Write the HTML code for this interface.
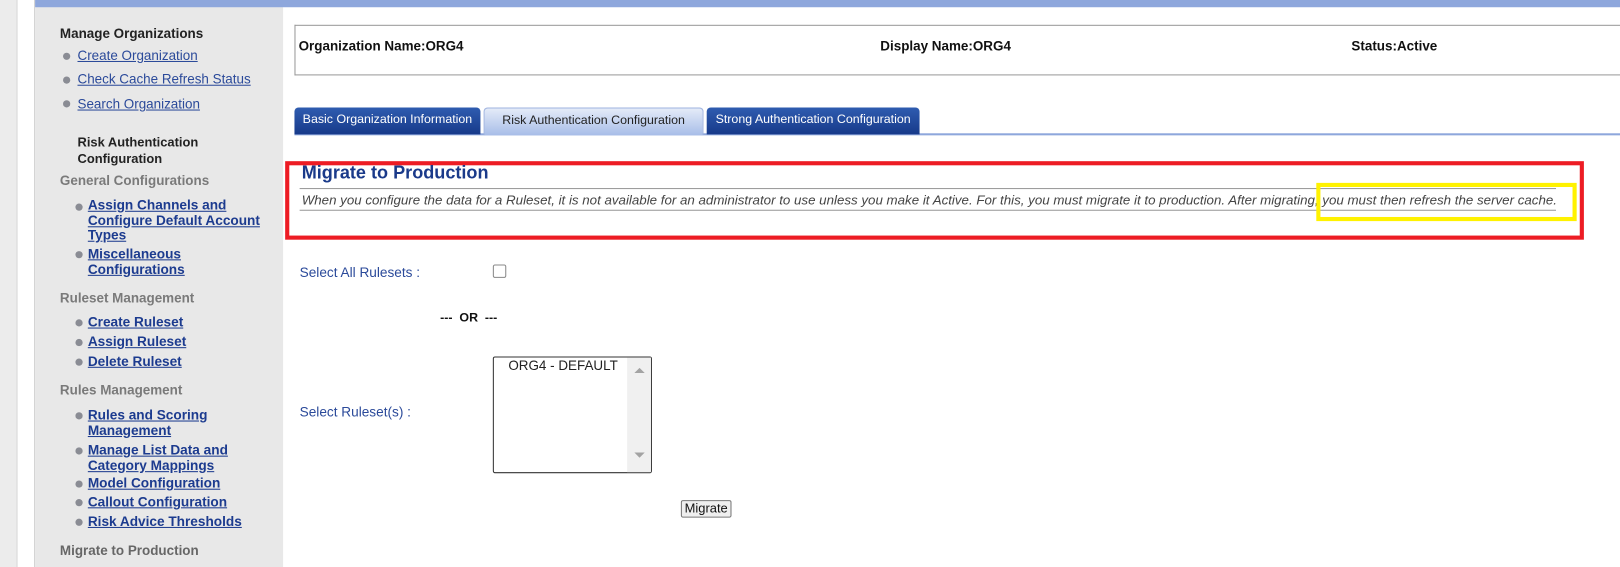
<!DOCTYPE html>
<html><head><meta charset="utf-8"><style>
*{margin:0;padding:0;box-sizing:border-box}
body{width:1620px;height:549px;overflow:hidden;background:#fff;font-family:"Liberation Sans",Arial,sans-serif;position:relative}
#w{position:absolute;left:0;top:0;width:1568px;height:532px;transform:scale(1.0332);transform-origin:0 0}
.a{position:absolute;white-space:nowrap}
.lnk{color:#2b4a9a;text-decoration:underline;font-size:13px}
.sub{color:#1c3b8f;text-decoration:underline;font-size:13.2px;font-weight:bold;line-height:14.6px}
.bul{position:absolute;width:7px;height:7px;border-radius:50%;background:#8a8c94}
.hd{font-size:13px;font-weight:bold;color:#7a7a7a}
.tab{position:absolute;top:104px;height:26px;border-radius:4px 4px 0 0;font-size:12px;line-height:22px;text-align:center;color:#fff;background:linear-gradient(#2f5cb0,#173a8a)}
</style></head><body><div id="w">
<div class="a" style="left:0;top:0;width:16px;height:549px;background:#ececec"></div>
<div class="a" style="left:16px;top:0;width:1px;height:549px;background:#d8d8d8"></div>
<div class="a" style="left:33px;top:0;width:1px;height:549px;background:#d0d0d0"></div>
<div class="a" style="left:34px;top:0;width:240px;height:549px;background:#e8e8e8"></div>
<div class="a" style="left:34px;top:0;width:1586px;height:7px;background:#8ea7dc"></div>

<div class="a" style="left:58px;top:25px;font-size:13px;font-weight:bold;color:#222">Manage Organizations</div>
<div class="bul" style="left:61px;top:51px"></div><div class="a lnk" style="left:75px;top:46px">Create Organization</div>
<div class="bul" style="left:61px;top:74px"></div><div class="a lnk" style="left:75px;top:69px">Check Cache Refresh Status</div>
<div class="bul" style="left:61px;top:97px"></div><div class="a lnk" style="left:75px;top:93px">Search Organization</div>
<div class="a" style="left:75px;top:130px;font-size:12.5px;font-weight:bold;color:#222;line-height:16px">Risk Authentication<br>Configuration</div>
<div class="a hd" style="left:58px;top:167px">General Configurations</div>
<div class="bul" style="left:73px;top:197px"></div><div class="a sub" style="left:85px;top:192px">Assign Channels and<br>Configure Default Account<br>Types</div>
<div class="bul" style="left:73px;top:243px"></div><div class="a sub" style="left:85px;top:239px">Miscellaneous<br>Configurations</div>
<div class="a hd" style="left:58px;top:281px">Ruleset Management</div>
<div class="bul" style="left:73px;top:309px"></div><div class="a sub" style="left:85px;top:305px">Create Ruleset</div>
<div class="bul" style="left:73px;top:328px"></div><div class="a sub" style="left:85px;top:324px">Assign Ruleset</div>
<div class="bul" style="left:73px;top:347px"></div><div class="a sub" style="left:85px;top:343px">Delete Ruleset</div>
<div class="a hd" style="left:58px;top:370px">Rules Management</div>
<div class="bul" style="left:73px;top:399px"></div><div class="a sub" style="left:85px;top:395px">Rules and Scoring<br>Management</div>
<div class="bul" style="left:73px;top:433px"></div><div class="a sub" style="left:85px;top:429px">Manage List Data and<br>Category Mappings</div>
<div class="bul" style="left:73px;top:465px"></div><div class="a sub" style="left:85px;top:461px">Model Configuration</div>
<div class="bul" style="left:73px;top:483px"></div><div class="a sub" style="left:85px;top:479px">Callout Configuration</div>
<div class="bul" style="left:73px;top:502px"></div><div class="a sub" style="left:85px;top:498px">Risk Advice Thresholds</div>
<div class="a hd" style="left:58px;top:525px;color:#666">Migrate to Production</div>

<div class="a" style="left:285px;top:24px;width:1340px;height:49px;border:1px solid #999;border-right:none"></div>
<div class="a" style="left:289px;top:37px;font-size:13px;font-weight:bold;color:#111">Organization Name:ORG4</div>
<div class="a" style="left:852px;top:37px;font-size:13px;font-weight:bold;color:#111">Display Name:ORG4</div>
<div class="a" style="left:1308px;top:37px;font-size:13px;font-weight:bold;color:#111">Status:Active</div>

<div class="a" style="left:285px;top:129px;width:1335px;height:2px;background:#8ea7dc"></div>
<div class="tab" style="left:285px;width:180px">Basic Organization Information</div>
<div class="tab" style="left:468px;width:213px;height:27px;background:linear-gradient(#e4ebf8,#a7bde8);color:#222;border:1px solid #9fb3df;border-bottom:none">Risk Authentication Configuration</div>
<div class="tab" style="left:684px;width:206px">Strong Authentication Configuration</div>

<div class="a" style="left:276px;top:156px;width:1257px;height:76px;border:4px solid #ed1c24"></div>
<div class="a" style="left:292px;top:157px;font-size:17.5px;font-weight:bold;color:#1a3a8a">Migrate to Production</div>
<div class="a" style="left:290px;top:182px;width:1216px;height:1px;background:#999"></div>
<div class="a" style="left:292px;top:186px;font-size:12.9px;font-style:italic;color:#444">When you configure the data for a Ruleset, it is not available for an administrator to use unless you make it Active. For this, you must migrate it to production. After migrating, you must then refresh the server cache.</div>
<div class="a" style="left:290px;top:203px;width:1216px;height:1px;background:#999"></div>
<div class="a" style="left:1274px;top:177px;width:252px;height:37px;border:4px solid #fff200"></div>

<div class="a" style="left:290px;top:256px;font-size:13.2px;color:#2b4a9a">Select All Rulesets :</div>
<div class="a" style="left:477px;top:256px;width:13px;height:13px;border:1px solid #888;border-radius:2px;background:#fff"></div>
<div class="a" style="left:426px;top:300px;font-size:12px;font-weight:bold;color:#111">---&nbsp; OR &nbsp;---</div>
<div class="a" style="left:290px;top:391px;font-size:13.2px;color:#2b4a9a">Select Ruleset(s) :</div>
<div class="a" style="left:477px;top:345px;width:154px;height:113px;border:1px solid #333;border-radius:2px;background:#fff">
 <div class="a" style="right:0;top:0;width:23px;height:111px;background:#f0f0f0"></div>
 <div class="a" style="right:6px;top:10px;width:0;height:0;border-left:5px solid transparent;border-right:5px solid transparent;border-bottom:5px solid #a3a3a3"></div>
 <div class="a" style="right:6px;top:92px;width:0;height:0;border-left:5px solid transparent;border-right:5px solid transparent;border-top:5px solid #a3a3a3"></div>
 <div class="a" style="left:14px;top:0px;font-size:13px;color:#222">ORG4 - DEFAULT</div>
</div>
<div class="a" style="left:659px;top:484px;width:49px;height:17px;border:1px solid #777;border-radius:2px;background:#efefef;font-size:12.5px;line-height:15px;text-align:center;color:#111">Migrate</div>
</div></body></html>
